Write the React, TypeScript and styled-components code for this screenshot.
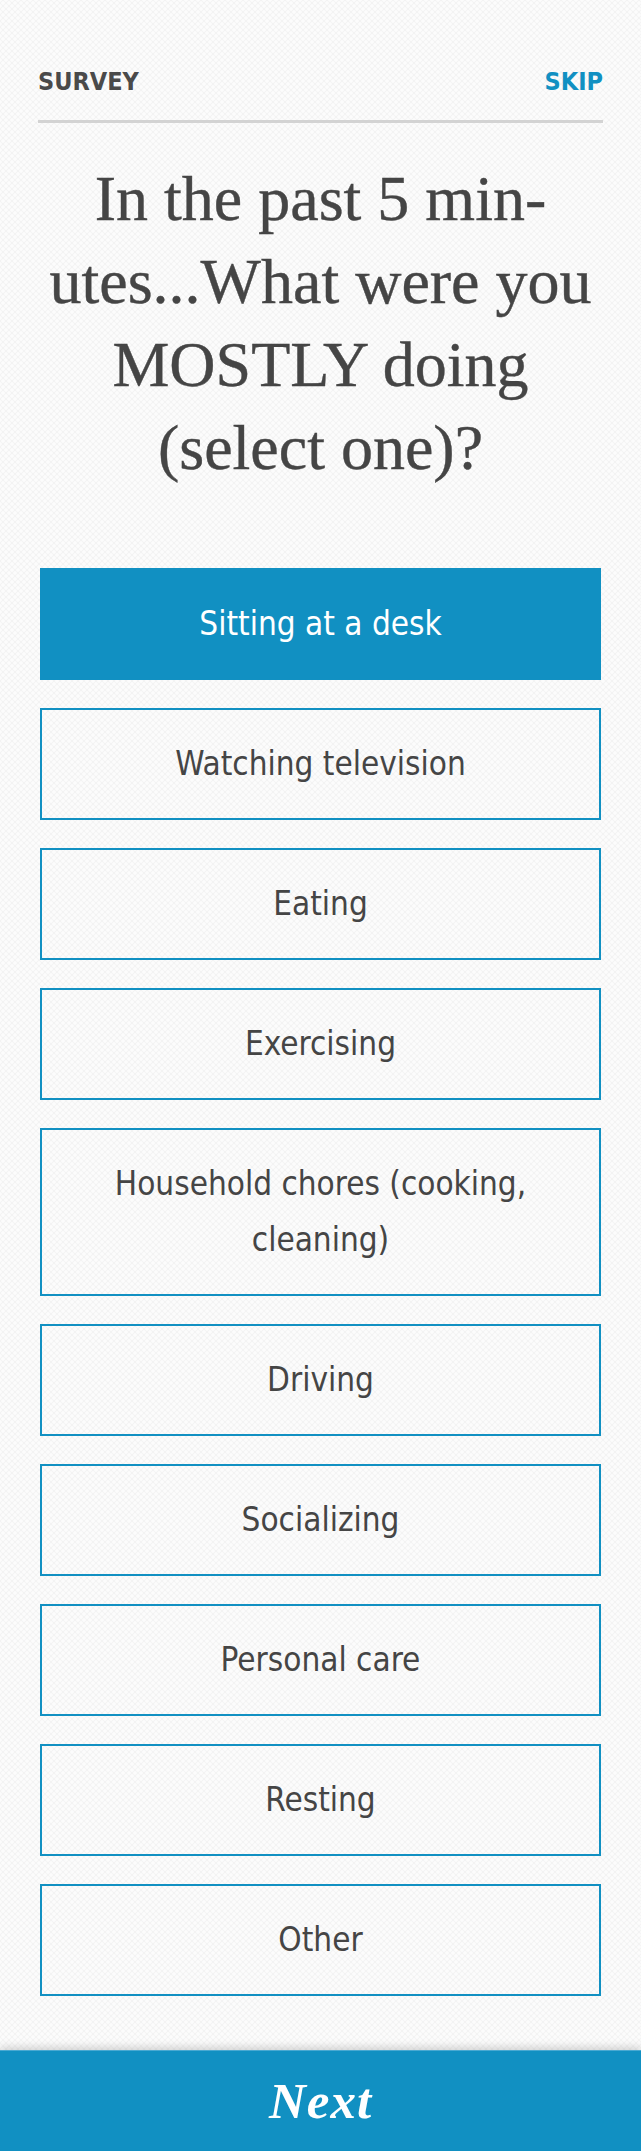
import React, { useState } from "react";
import styled, { createGlobalStyle } from "styled-components";

const BLUE = "#1190c2";

const GlobalStyle = createGlobalStyle`
  html, body {
    margin: 0;
    padding: 0;
  }
  body {
    background-color: #f3f3f3;
    background-image:
      radial-gradient(circle at center, #fcfcfc 0 1.4px, transparent 2.2px),
      radial-gradient(circle at center, #fcfcfc 0 1.4px, transparent 2.2px);
    background-size: 6px 6px;
    background-position: 0 0, 3px 3px;
    font-family: "DejaVu Sans Condensed", "DejaVu Sans", sans-serif;
  }
  * { box-sizing: border-box; }
`;

const Page = styled.div`
  min-height: 100vh;
  display: flex;
  flex-direction: column;
`;

const Main = styled.main`
  flex: 1;
  padding: 0 38px 50px;
`;

const Header = styled.header`
  display: flex;
  justify-content: space-between;
  align-items: center;
  padding: 66px 0 23px;
  border-bottom: 3px solid #d3d3d3;
`;

const HeaderLabel = styled.span<{ $accent?: boolean }>`
  font-family: "DejaVu Sans Condensed", "DejaVu Sans", sans-serif;
  font-weight: bold;
  font-size: 25px;
  line-height: 31px;
  color: ${(p) => (p.$accent ? BLUE : "#4a4a4a")};
  cursor: ${(p) => (p.$accent ? "pointer" : "default")};
`;

const Title = styled.h1`
  margin: 34px 0 0;
  font-family: "Liberation Serif", "DejaVu Serif", serif;
  font-weight: normal;
  font-size: 64px;
  line-height: 83px;
  color: #454545;
  text-align: center;
  -webkit-text-stroke: 0.4px #454545;
`;

const TitleLine = styled.span`
  display: block;
  white-space: nowrap;
`;

const Options = styled.ul`
  list-style: none;
  margin: 79px 0 0;
  padding: 0 2px;
  display: flex;
  flex-direction: column;
  gap: 28px;
`;

const Option = styled.li<{ $selected: boolean }>`
  border: 2px solid ${BLUE};
  background: ${(p) => (p.$selected ? BLUE : "transparent")};
  color: ${(p) => (p.$selected ? "#ffffff" : "#454545")};
  padding: 26px 40px;
  font-family: "DejaVu Sans Condensed", "DejaVu Sans", sans-serif;
  font-size: 33px;
  line-height: 56px;
  text-align: center;
  cursor: pointer;
`;

const Footer = styled.footer`
  height: 101px;
  background: ${BLUE};
  box-shadow: 0 -3px 8px rgba(0, 0, 0, 0.16);
  border-top: 1px solid #4aa9d2;
  display: flex;
  align-items: center;
  justify-content: center;
`;

const NextButton = styled.button`
  background: none;
  border: none;
  padding: 0;
  font-family: "Liberation Serif", "DejaVu Serif", serif;
  font-weight: bold;
  font-style: italic;
  font-size: 51px;
  letter-spacing: 1px;
  color: #ffffff;
  cursor: pointer;
`;

const OPTIONS = [
  "Sitting at a desk",
  "Watching television",
  "Eating",
  "Exercising",
  "Household chores (cooking, cleaning)",
  "Driving",
  "Socializing",
  "Personal care",
  "Resting",
  "Other",
];

export default function App() {
  const [selected, setSelected] = useState(0);
  return (
    <>
      <GlobalStyle />
      <Page>
        <Main>
          <Header>
            <HeaderLabel>SURVEY</HeaderLabel>
            <HeaderLabel $accent>SKIP</HeaderLabel>
          </Header>
          <Title>
            <TitleLine>In the past 5 min-</TitleLine>
            <TitleLine>utes...What were you</TitleLine>
            <TitleLine>MOSTLY doing</TitleLine>
            <TitleLine>(select one)?</TitleLine>
          </Title>
          <Options>
            {OPTIONS.map((o, i) => (
              <Option key={o} $selected={i === selected} onClick={() => setSelected(i)}>
                {o}
              </Option>
            ))}
          </Options>
        </Main>
        <Footer>
          <NextButton>Next</NextButton>
        </Footer>
      </Page>
    </>
  );
}
